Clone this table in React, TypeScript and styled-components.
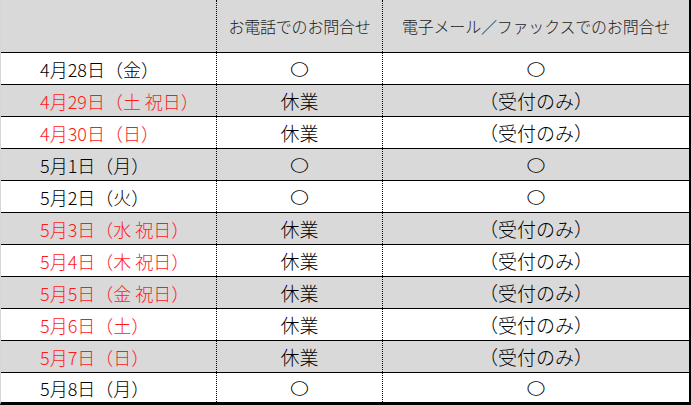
import React from "react";
import styled, { createGlobalStyle } from "styled-components";

const GlobalStyle = createGlobalStyle`
  html, body {
    margin: 0;
    padding: 0;
    background: #ffffff;
  }
  body {
    font-family: "Noto Sans CJK JP", "Noto Sans", sans-serif;
  }
`;

const Sheet = styled.div`
  width: 691px;
  height: 405px;
  box-sizing: border-box;
  border-left: 1px solid #d6d6d6;
  border-right: 2px solid #000;
  border-bottom: 3px solid #000;
  display: grid;
  grid-template-columns: 215px 166px 307px;
  grid-template-rows: 52px repeat(10, 32px) 30px;
  font-size: 19px;
  font-weight: 300;
  color: #000;
`;

const Cell = styled.div<{ $shade?: boolean; $first?: boolean; $col: number; $align?: "left" | "center"; $red?: boolean }>`
  box-sizing: border-box;
  display: flex;
  align-items: center;
  justify-content: ${(p) => (p.$align === "left" ? "flex-start" : "center")};
  padding-left: ${(p) => (p.$align === "left" ? "39px" : "0")};
  font-size: ${(p) => (p.$align === "left" ? "18px" : "inherit")};
  background: ${(p) => (p.$shade ? "#d9d9d9" : "#ffffff")};
  border-top: ${(p) => (p.$first ? "none" : "1px solid #000")};
  border-left: ${(p) => (p.$col > 0 ? "1px dotted #000" : "none")};
  color: ${(p) => (p.$red ? "#ff1a1a" : "#000")};
  white-space: nowrap;
  line-height: 1;
`;

const HeadCell = styled(Cell)`
  font-size: 16px;
  color: #222;
  letter-spacing: -0.2px;
`;

// the sheet's circle mark is a little flatter than it is wide
const Mark = styled.span`
  display: inline-block;
  transform: scaleY(0.8);
`;

type Row = { date: string; red: boolean; open: boolean };

const rows: Row[] = [
  { date: "4月28日（金）", red: false, open: true },
  { date: "4月29日（土 祝日）", red: true, open: false },
  { date: "4月30日（日）", red: true, open: false },
  { date: "5月1日（月）", red: false, open: true },
  { date: "5月2日（火）", red: false, open: true },
  { date: "5月3日（水 祝日）", red: true, open: false },
  { date: "5月4日（木 祝日）", red: true, open: false },
  { date: "5月5日（金 祝日）", red: true, open: false },
  { date: "5月6日（土）", red: true, open: false },
  { date: "5月7日（日）", red: true, open: false },
  { date: "5月8日（月）", red: false, open: true },
];

const App = () => {
  return (
    <>
      <GlobalStyle />
      <Sheet>
        <HeadCell $first $shade $col={0} />
        <HeadCell $first $shade $col={1}>お電話でのお問合せ</HeadCell>
        <HeadCell $first $shade $col={2}>電子メール／ファックスでのお問合せ</HeadCell>
        {rows.map((r, i) => {
          const shade = i % 2 === 1;
          return (
            <React.Fragment key={r.date}>
              <Cell $shade={shade} $col={0} $align="left" $red={r.red}>
                {r.date}
              </Cell>
              <Cell $shade={shade} $col={1}>
                {r.open ? <Mark>〇</Mark> : "休業"}
              </Cell>
              <Cell $shade={shade} $col={2}>
                {r.open ? <Mark>〇</Mark> : "（受付のみ）"}
              </Cell>
            </React.Fragment>
          );
        })}
      </Sheet>
    </>
  );
};

export default App;
